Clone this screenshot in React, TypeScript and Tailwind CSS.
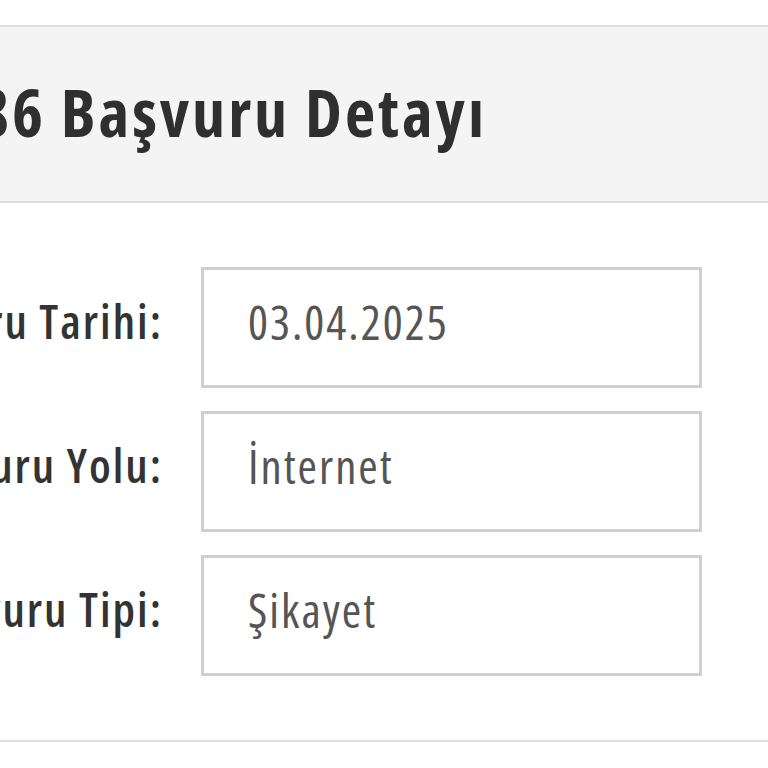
const fields = [
  { label: 'Başvuru Tarihi:', value: '03.04.2025' },
  { label: 'Başvuru Yolu:', value: 'İnternet' },
  { label: 'Başvuru Tipi:', value: 'Şikayet' },
];

const fontStack = "font-['Open_Sans','Roboto','DejaVu_Sans_Condensed',sans-serif] font-stretch-condensed";

export default function App() {
  return (
    <div className={`w-[768px] h-[768px] overflow-hidden bg-white pt-[25px] ${fontStack}`}>
      <div className="h-[178px] flex items-center bg-[#f4f4f4] border-y-2 border-[#dedede] pb-[6px]">
        <div className="w-[487px] shrink-0 flex justify-end">
          <h1 className="whitespace-nowrap text-[66px] leading-none font-bold tracking-[3px] text-[#2f2f2f]">
            3886 Başvuru Detayı
          </h1>
        </div>
      </div>

      <div className="flex flex-col gap-[23px] py-[64px] border-b-2 border-[#dedede]">
        {fields.map(f => (
          <div key={f.label} className="flex items-center">
            <div className="w-[163px] shrink-0 flex justify-end pb-[12px]">
              <span className="whitespace-nowrap text-[47px] font-semibold tracking-[2px] text-[#333]">{f.label}</span>
            </div>
            <div className="ml-[38px] w-[501px] h-[121px] shrink-0 flex items-center border-[3px] border-[#cfcfcf] pl-[44px] pb-[10px]">
              <span className="text-[47px] tracking-[2px] text-[#555]">{f.value}</span>
            </div>
          </div>
        ))}
      </div>
    </div>
  );
}
